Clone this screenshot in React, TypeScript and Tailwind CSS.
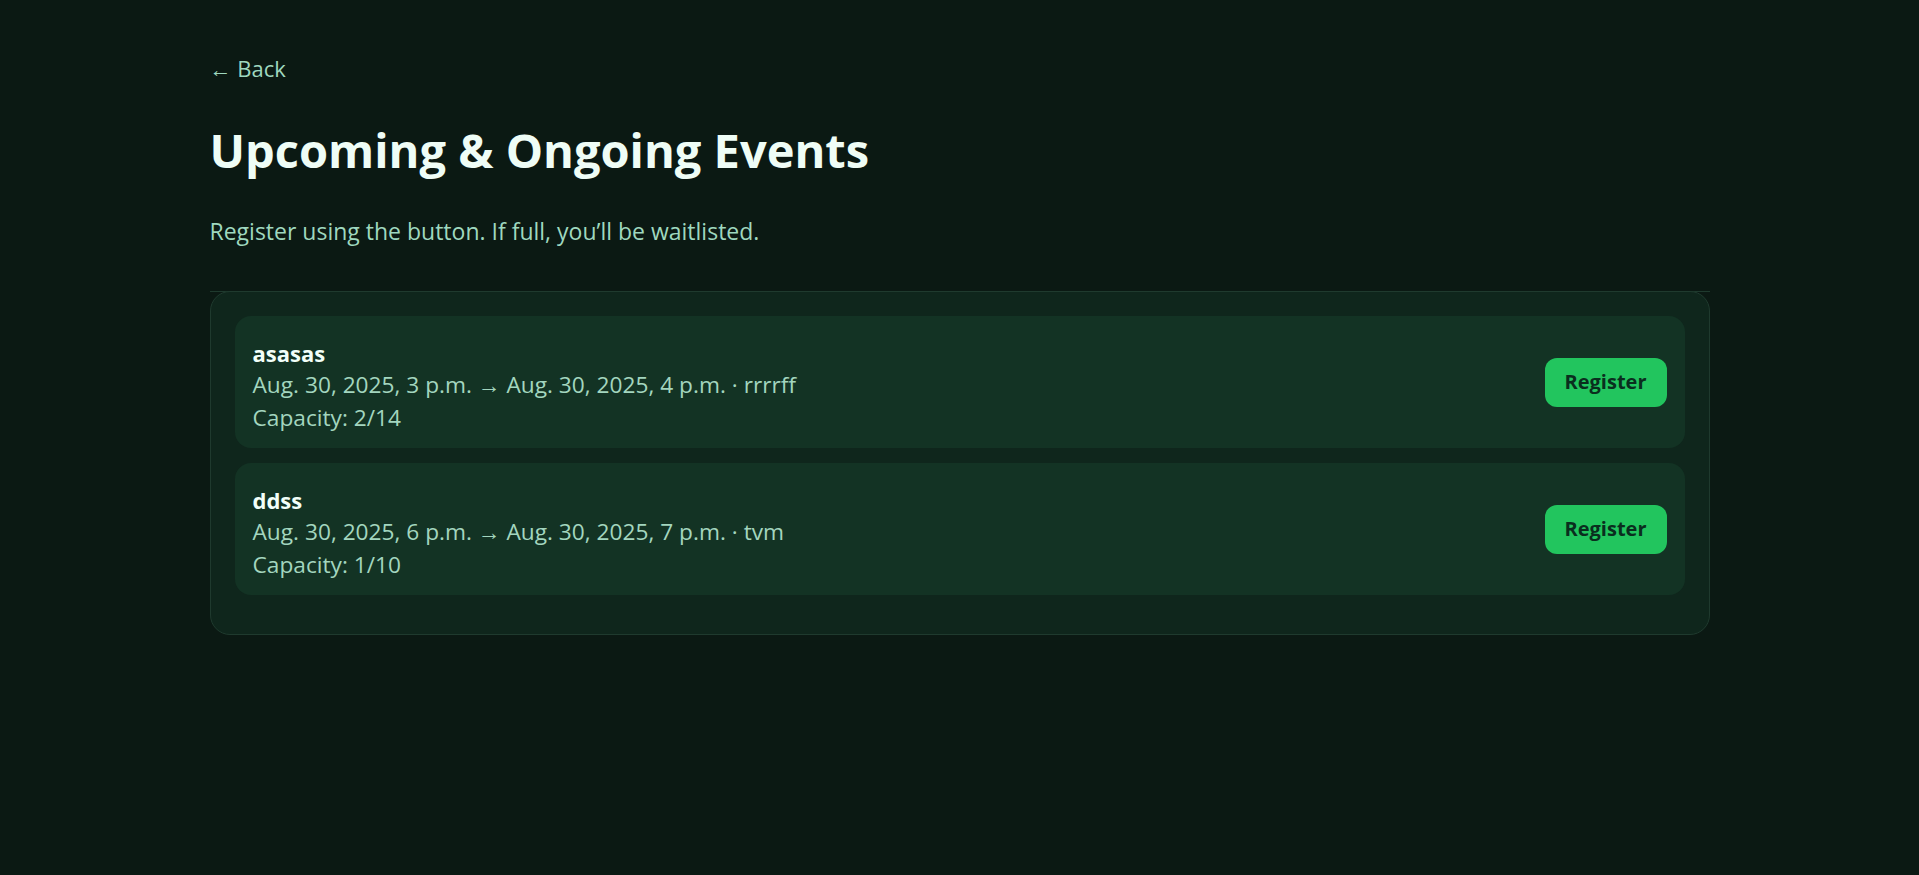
import React from "react";

const events = [
  { title: "asasas", when: "Aug. 30, 2025, 3 p.m. → Aug. 30, 2025, 4 p.m. · rrrrff", cap: "Capacity: 2/14" },
  { title: "ddss", when: "Aug. 30, 2025, 6 p.m. → Aug. 30, 2025, 7 p.m. · tvm", cap: "Capacity: 1/10" },
];

export default function App() {
  return (
    <div className="min-h-screen w-full bg-[#0b1913] font-['Open_Sans',sans-serif]">
      <div className="mx-auto max-w-[1500px] pt-[54px]">
        <a href="#" className="block text-[22px] leading-[28px] text-[#9fd8bf]">← Back</a>
        <h1 className="mt-[38px] text-[47px] font-bold leading-[60px] text-[#effdf6]">Upcoming &amp; Ongoing Events</h1>
        <p className="mt-[35px] text-[23px] leading-[32px] text-[#9fd8bf]">Register using the button. If full, you’ll be waitlisted.</p>
        <div className="mt-[44px] border-t border-[#1f3a2e]" />
        <div className="-mt-px rounded-[20px] border border-[#1f3a2e] bg-[#0f261c] px-6 pt-6 pb-6">
          {events.map((e) => (
            <div key={e.title} className="mb-[15px] flex h-[132px] items-center justify-between rounded-[16px] bg-[#133324] pl-[18px] pr-[18px]">
              <div className="flex flex-col pt-[7px]">
                <div className="text-[22px] font-bold leading-[30px] text-[#f2fff9]">{e.title}</div>
                <div className="text-[22.7px] leading-[33px] text-[#a3d6bf]">{e.when}</div>
                <div className="text-[22.7px] leading-[33px] text-[#a3d6bf]">{e.cap}</div>
              </div>
              <button className="h-[49px] w-[122px] rounded-[12px] bg-[#22c55e] text-[20px] font-bold text-[#0a2e1e]">Register</button>
            </div>
          ))}
        </div>
      </div>
    </div>
  );
}
